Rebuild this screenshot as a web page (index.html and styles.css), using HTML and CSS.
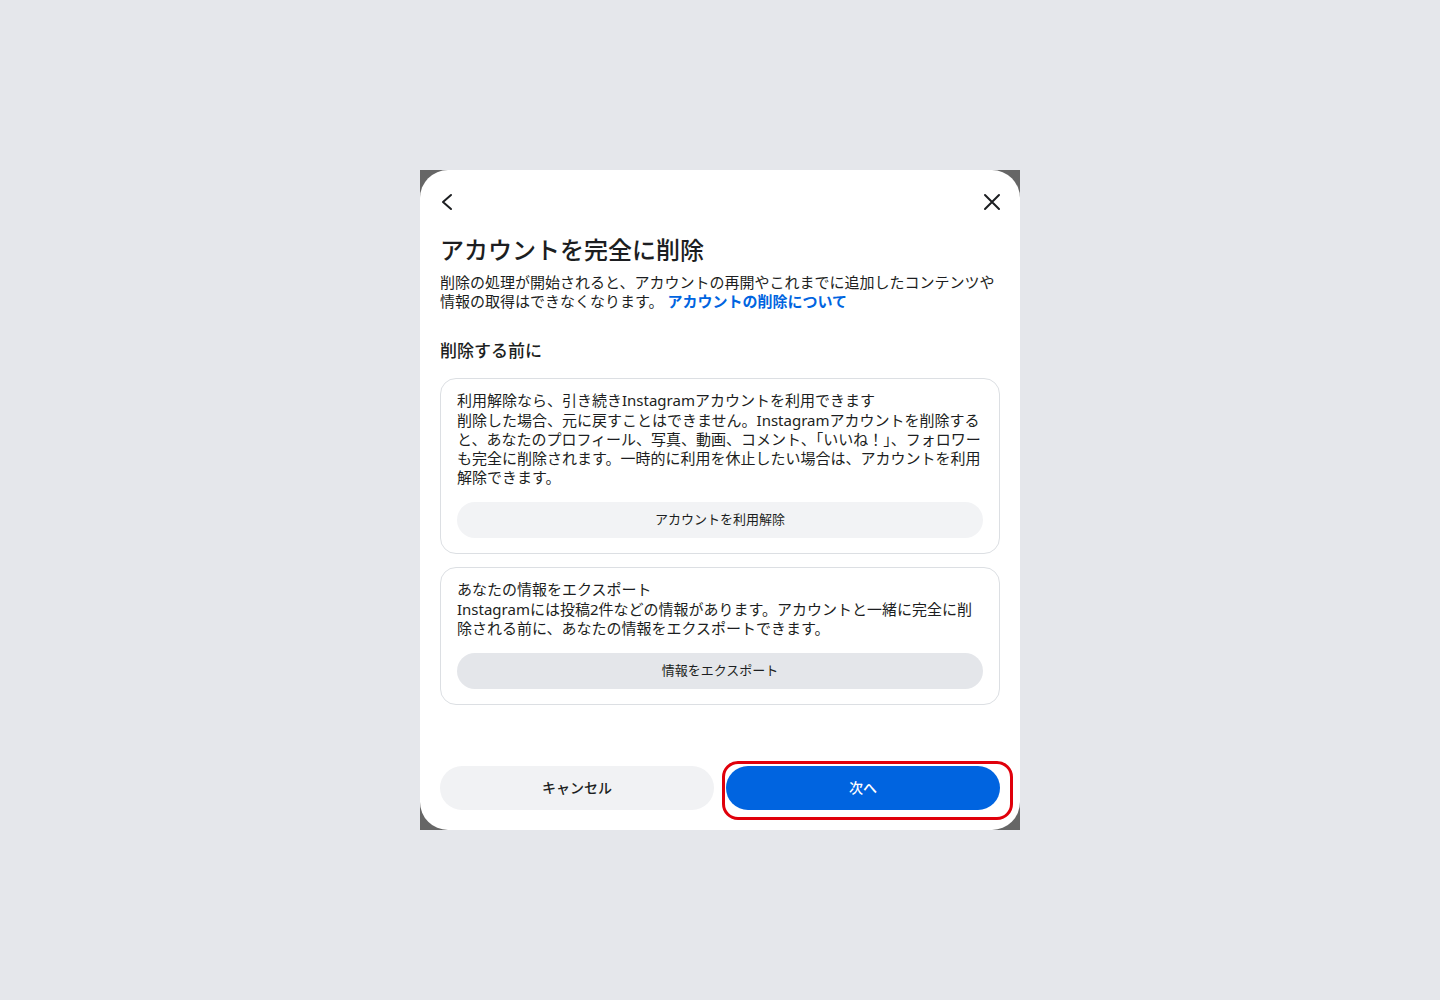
FILE: index.html
```html
<!DOCTYPE html>
<html lang="ja">
<head>
<meta charset="utf-8">
<title>アカウントを完全に削除</title>
<link rel="stylesheet" href="styles.css">
</head>
<body>
<div class="backdrop">
  <div class="dialog">
    <div class="header">
      <button class="icon-btn" aria-label="戻る">
        <svg width="24" height="24" viewBox="0 0 24 24"><polyline points="15,5 7,12 15,19" fill="none" stroke="#1c1e21" stroke-width="2" stroke-linecap="round" stroke-linejoin="round"/></svg>
      </button>
      <button class="icon-btn" aria-label="閉じる">
        <svg width="24" height="24" viewBox="0 0 24 24"><path d="M5 5L19 19M19 5L5 19" fill="none" stroke="#1c1e21" stroke-width="2" stroke-linecap="round"/></svg>
      </button>
    </div>
    <div class="content">
      <h1 class="title">アカウントを完全に削除</h1>
      <p class="desc">削除の処理が開始されると、アカウントの再開やこれまでに追加したコンテンツや情報の取得はできなくなります。<a class="link" href="#">アカウントの削除について</a></p>
      <h2 class="subhead">削除する前に</h2>
      <div class="cards">
        <div class="card">
          <p class="card-title">利用解除なら、引き続きInstagramアカウントを利用できます</p>
          <p class="card-body">削除した場合、元に戻すことはできません。Instagramアカウントを削除すると、あなたのプロフィール、写真、動画、コメント、「いいね！」、フォロワーも完全に削除されます。一時的に利用を休止したい場合は、アカウントを利用解除できます。</p>
          <button class="card-btn">アカウントを利用解除</button>
        </div>
        <div class="card">
          <p class="card-title">あなたの情報をエクスポート</p>
          <p class="card-body">Instagramには投稿2件などの情報があります。アカウントと一緒に完全に削除される前に、あなたの情報をエクスポートできます。</p>
          <button class="card-btn card-btn-dark">情報をエクスポート</button>
        </div>
      </div>
    </div>
    <div class="footer">
      <button class="btn btn-cancel">キャンセル</button>
      <div class="next-wrap">
        <button class="btn btn-next">次へ</button>
        <span class="highlight"></span>
      </div>
    </div>
  </div>
</div>
</body>
</html>
```

FILE: styles.css
```css
* {
  box-sizing: border-box;
}

html, body {
  margin: 0;
  padding: 0;
}

body {
  background: #e5e7eb;
  font-family: "Noto Sans", "Noto Sans CJK JP", sans-serif;
  color: #1c1e21;
  min-height: 100vh;
  display: flex;
  align-items: center;
  justify-content: center;
}

.backdrop {
  width: 600px;
  height: 660px;
  background: #666666;
}

.dialog {
  width: 100%;
  height: 100%;
  background: #ffffff;
  border-radius: 28px;
  display: flex;
  flex-direction: column;
  padding: 0 20px 20px;
}

.header {
  display: flex;
  justify-content: space-between;
  align-items: center;
  margin: 0 -12px;
  padding-top: 12px;
}

.icon-btn {
  width: 40px;
  height: 40px;
  border: none;
  background: transparent;
  padding: 0;
  display: flex;
  align-items: center;
  justify-content: center;
  cursor: pointer;
}

.content {
  flex: 1;
}

.title {
  margin: 12px 0 0;
  font-size: 24px;
  line-height: 32px;
  font-weight: 500;
}

.desc {
  margin: 7px 0 0;
  font-size: 15px;
  line-height: 19px;
  font-weight: 400;
}

.link {
  color: #0064e0;
  font-weight: 700;
  text-decoration: none;
  margin-left: 4px;
}

.subhead {
  margin: 29px 0 0;
  font-size: 17px;
  line-height: 22px;
  font-weight: 500;
}

.cards {
  margin-top: 16px;
  display: flex;
  flex-direction: column;
  gap: 13px;
}

.card {
  border: 1px solid #dcdfe3;
  border-radius: 16px;
  padding: 12px 16px 15px;
}

.card-title {
  margin: 0 0 1px;
  font-size: 15px;
  line-height: 19px;
}

.card-body {
  margin: 0;
  font-size: 15px;
  line-height: 19px;
}

.card-btn {
  display: block;
  width: 100%;
  height: 36px;
  margin-top: 15px;
  padding: 0 0 3px;
  border: none;
  border-radius: 18px;
  background: #f2f3f5;
  font-family: inherit;
  font-size: 13px;
  color: #1c1e21;
  cursor: pointer;
}

.card-btn-dark {
  background: #e4e6ea;
}

.footer {
  display: grid;
  grid-template-columns: 1fr 1fr;
  gap: 12px;
}

.btn {
  height: 44px;
  padding: 0 0 2px;
  border: none;
  border-radius: 22px;
  font-family: inherit;
  font-size: 14px;
  font-weight: 500;
  cursor: pointer;
}

.btn-cancel {
  background: #f1f2f4;
  color: #1c1e21;
}

.next-wrap {
  position: relative;
  display: flex;
}

.btn-next {
  flex: 1;
  background: #0064e0;
  color: #ffffff;
}

.highlight {
  position: absolute;
  left: -4px;
  top: -5px;
  right: -13px;
  bottom: -10px;
  border: 3px solid #e0000b;
  border-radius: 16px;
  pointer-events: none;
}
```
